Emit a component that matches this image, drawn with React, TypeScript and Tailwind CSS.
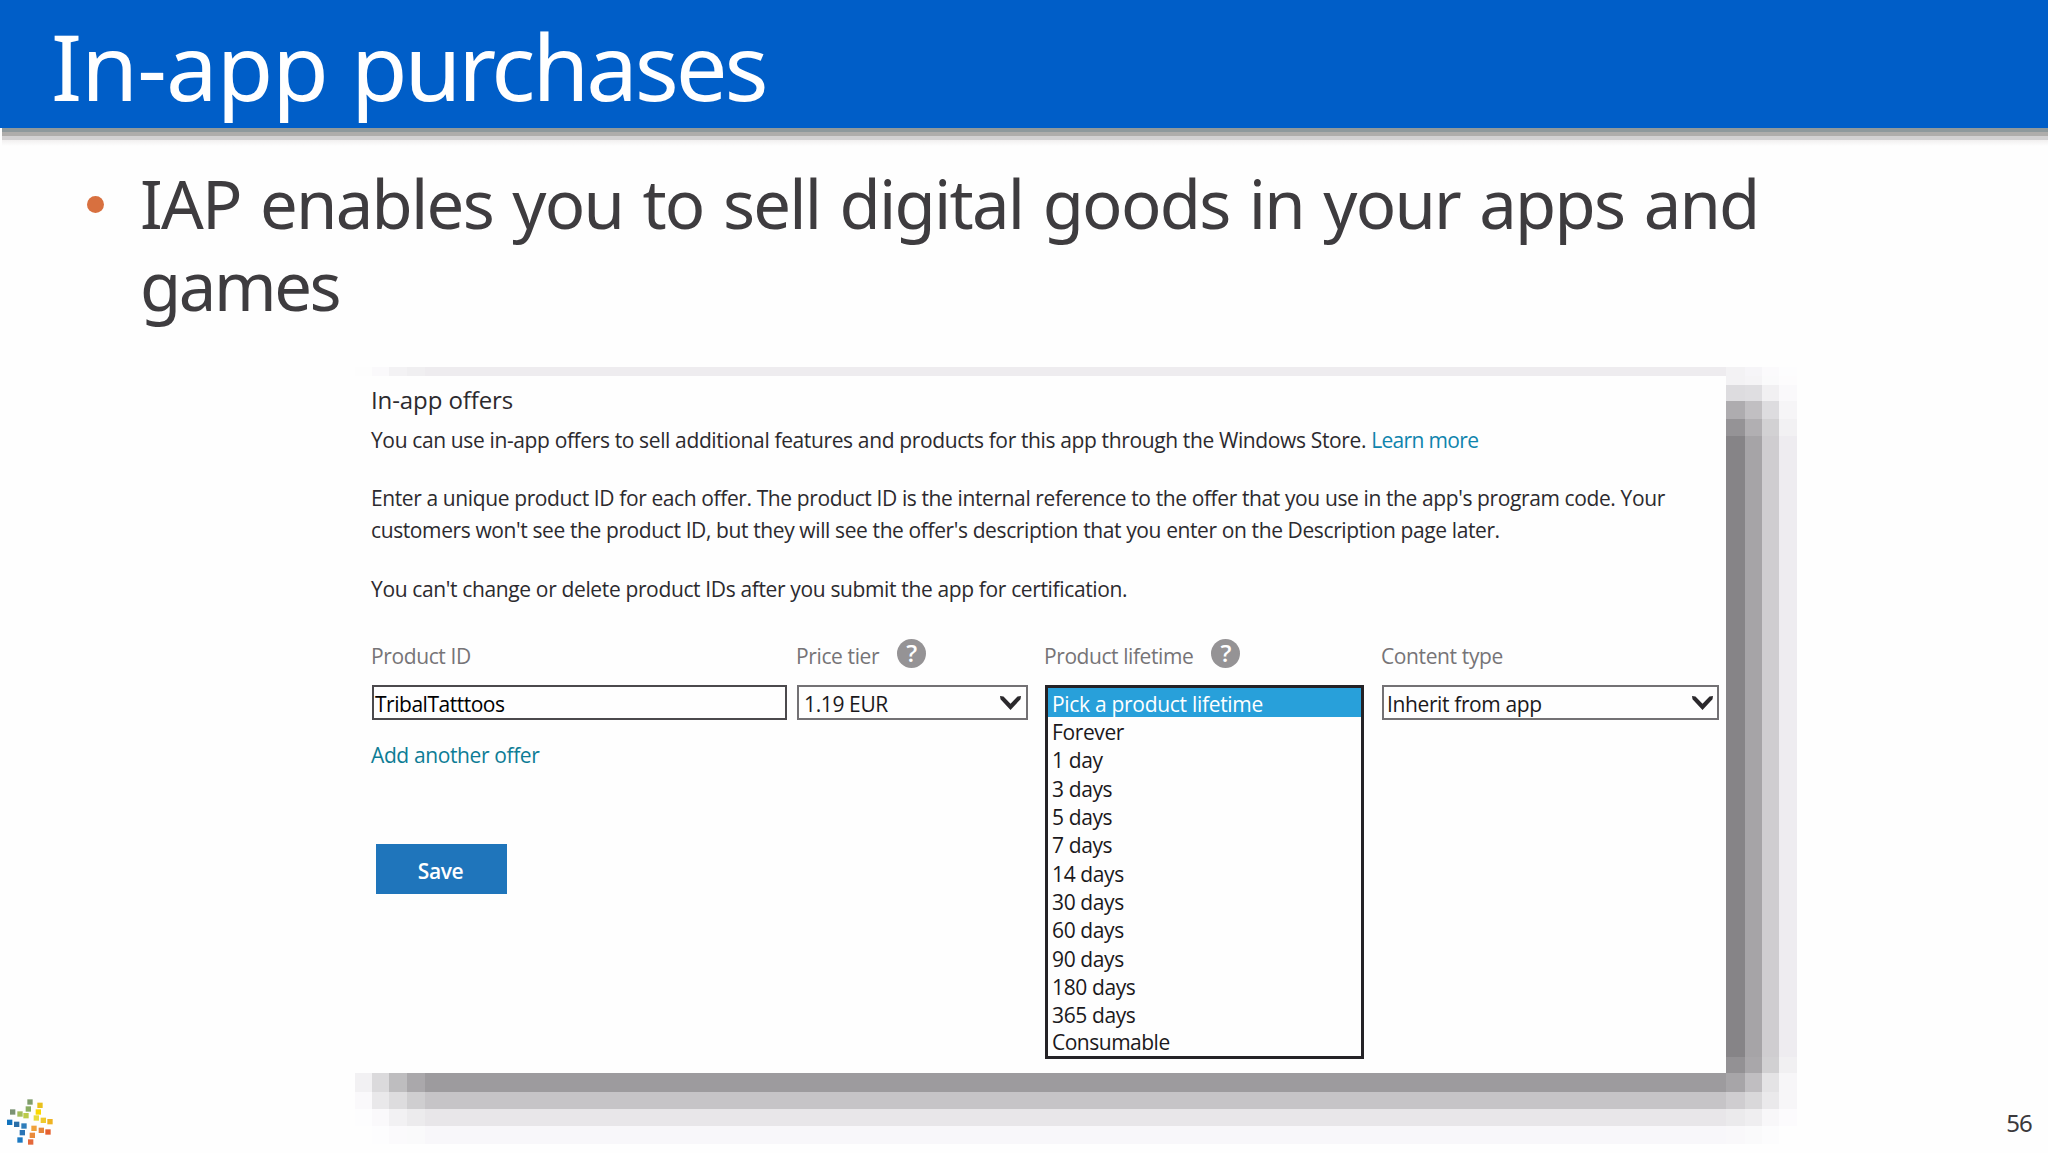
const shadowColumns = [
  'w-[17px]',
  'w-[17px]',
  'w-[18px]',
  'w-[18px]',
  'w-[1301px]',
  'w-[19px]',
  'w-[17px]',
  'w-[17px]',
  'w-[18px]',
];

const none = 'bg-transparent';

// The panel's drop shadow is a coarse grid of flat cells.
const shadowRows: { height: string; cells: string[] }[] = [
  { height: 'h-[9px]', cells: ['bg-[#fdfdfd]', 'bg-[#faf9fb]', 'bg-[#f3f2f4]', 'bg-[#f0eff1]', 'bg-[#eeecef]', 'bg-[#f3f2f4]', 'bg-[#f6f5f8]', 'bg-[#fbfafc]', 'bg-[#fdfdfe]'] },
  { height: 'h-[9px]', cells: [none, none, none, none, none, 'bg-[#f3f2f4]', 'bg-[#f5f4f6]', 'bg-[#fafafb]', 'bg-[#fdfcfd]'] },
  { height: 'h-[16px]', cells: [none, none, none, none, none, 'bg-[#dddcdf]', 'bg-[#dfdee1]', 'bg-[#f1f0f2]', 'bg-[#faf9fb]'] },
  { height: 'h-[18px]', cells: [none, none, none, none, none, 'bg-[#aeacaf]', 'bg-[#c1bfc2]', 'bg-[#dddcdf]', 'bg-[#f6f5f7]'] },
  { height: 'h-[17px]', cells: [none, none, none, none, none, 'bg-[#959396]', 'bg-[#b1afb2]', 'bg-[#d2d1d3]', 'bg-[#f2f1f3]'] },
  { height: 'h-[621px]', cells: [none, none, none, none, none, 'bg-[#868487]', 'bg-[#a6a4a7]', 'bg-[#cfcdd0]', 'bg-[#eeecf0]'] },
  { height: 'h-[16px]', cells: [none, none, none, none, none, 'bg-[#939194]', 'bg-[#a9a7aa]', 'bg-[#d1d0d2]', 'bg-[#f1f0f2]'] },
  { height: 'h-[19px]', cells: ['bg-[#f2f1f3]', 'bg-[#dbdadc]', 'bg-[#bebdbf]', 'bg-[#aaa8ab]', 'bg-[#9d9b9e]', 'bg-[#a7a5a8]', 'bg-[#c0bec1]', 'bg-[#e4e3e5]', 'bg-[#f7f6f8]'] },
  { height: 'h-[17px]', cells: ['bg-[#faf9fb]', 'bg-[#e9e8ea]', 'bg-[#dddcde]', 'bg-[#cfced0]', 'bg-[#c6c4c7]', 'bg-[#cfcdd0]', 'bg-[#d9d8da]', 'bg-[#eae9eb]', 'bg-[#f7f6f8]'] },
  { height: 'h-[17px]', cells: ['bg-[#fdfdfe]', 'bg-[#faf9fb]', 'bg-[#f2f1f3]', 'bg-[#ecebed]', 'bg-[#e8e6e9]', 'bg-[#ebeaec]', 'bg-[#efeef0]', 'bg-[#f8f7f9]', 'bg-[#fcfbfd]'] },
  { height: 'h-[18px]', cells: ['bg-[#fefefe]', 'bg-[#fdfdfe]', 'bg-[#fbfafc]', 'bg-[#fafafb]', 'bg-[#f8f7fa]', 'bg-[#f9f8fa]', 'bg-[#fafafb]', 'bg-[#fcfcfd]', 'bg-[#fefefe]'] },
];

const lifetimes = [
  'Forever',
  '1 day',
  '3 days',
  '5 days',
  '7 days',
  '14 days',
  '30 days',
  '60 days',
  '90 days',
  '180 days',
  '365 days',
];

function PanelShadow() {
  return (
    <div className="absolute -top-[9px] left-0 w-[1442px]" aria-hidden="true">
      {shadowRows.map((row, r) => (
        <div key={r} className={`flex ${row.height}`}>
          {row.cells.map((cell, c) => (
            <div key={c} className={`${shadowColumns[c]} ${cell}`} />
          ))}
        </div>
      ))}
    </div>
  );
}

function HelpIcon() {
  return (
    <span className="mb-[6px] flex size-[29px] items-center justify-center rounded-full bg-[#959395] text-[24px] leading-none font-semibold tracking-normal text-white">
      ?
    </span>
  );
}

function Chevron() {
  return (
    <svg className="-mt-[2px]" width="21" height="14" viewBox="0 0 21 14">
      <path d="M0 0 L3.5 0.6 L10.5 7.8 L17.5 0.6 L21 0 L20.5 3.2 L10.5 14 L0.5 3.2 Z" fill="#2b292c" />
    </svg>
  );
}

function Logo() {
  const squares: [number, number, string][] = [
    [90, 66, '#7f9d6c'], [85, 87, '#8aad62'], [38, 96, '#7b9274'], [60, 102, '#a3bd5c'], [78, 107, '#bccb4a'],
    [120, 76, '#e8c01d'], [115, 96, '#fbd800'], [109, 114, '#e9dc3c'], [130, 121, '#efc92c'], [150, 125, '#efb321'],
    [29, 127, '#1273bd'], [50, 133, '#2a6fa8'], [72, 138, '#2f7dba'], [67, 158, '#2b74b5'], [60, 180, '#1c79c2'],
    [102, 145, '#f0a13c'], [124, 151, '#e5853a'], [144, 156, '#e5602f'], [97, 166, '#e98a3c'], [92, 186, '#e4683a'],
  ];
  return (
    <svg width="80" height="73" viewBox="0 0 240 219">
      {squares.map(([x, y, fill]) => (
        <rect key={`${x}-${y}`} x={x - 8} y={y - 8} width="16" height="16" fill={fill} />
      ))}
    </svg>
  );
}

function Option({ label }: { label: string }) {
  return <li className="h-[28.33px] pl-[4px] leading-[30.33px]">{label}</li>;
}

export default function App() {
  return (
    <div className="relative flex h-[1153px] w-[2048px] flex-col overflow-hidden bg-[#fefefe] font-['Noto_Sans',sans-serif]">
      <header className="flex h-[128px] shrink-0 items-center bg-[#005ec8] pt-[3px] pl-[51px]">
        <h1 className="text-[92px] leading-[120px] tracking-[-0.9px] whitespace-nowrap text-white">
          In-app <span className="tracking-[-3.1px]">purchases</span>
        </h1>
      </header>
      <div className="ml-[2px] h-[4px] shrink-0 bg-[#8f999c]" />
      <div className="ml-[2px] h-[4px] shrink-0 bg-[#afadab]" />
      <div className="ml-[2px] h-[4px] shrink-0 bg-[#d3d1d2]" />
      <div className="ml-[2px] h-[6px] shrink-0 bg-linear-to-b from-[#f1efef] to-[#fefefe]" />

      <div className="mt-[17px] flex h-[164px] shrink-0 pl-[87px]">
        <span className="mt-[32.5px] size-[17px] shrink-0 rounded-full bg-[#d8703f]" />
        <p className="ml-[36px] text-[67px] leading-[81.7px] tracking-[-1.75px] [word-spacing:3.6px] whitespace-nowrap text-[#3e3c3f]">
          IAP enables you to sell digital goods in your apps and
          <br />
          <span className="tracking-[-2.4px]">games</span>
        </p>
      </div>

      <section className="relative mt-[49px] ml-[355px] h-[697px] w-[1371px] shrink-0 font-['Open_Sans',sans-serif] text-[21px] leading-[32px] tracking-[-0.38px] whitespace-nowrap text-[#2c2a2e]">
        <PanelShadow />
        <div className="relative flex h-full flex-col bg-[#fefefe] pt-[8px] pl-[16px]">
          <h2 className="text-[24px] leading-[32px] tracking-[-0.1px]">In-app offers</h2>
          <p className="mt-[8px] tracking-[-0.37px]">
            You can use in-app offers to sell additional features and products for this app through the Windows Store.{' '}
            <a className="tracking-[-0.65px] text-[#0f84ad]">Learn more</a>
          </p>
          <p className="mt-[26px] tracking-[-0.39px]">
            Enter a unique product ID for each offer. The product ID is the internal reference to the offer that you use in the app's program code. Your
            <br />
            customers won't see the product ID, but they will see the offer's description that you enter on the Description page later.
          </p>
          <p className="mt-[27px] tracking-[-0.36px]">You can't change or delete product IDs after you submit the app for certification.</p>

          <div className="mt-[35px] grid h-[32px] grid-cols-[425px_248px_337px_337px] text-[#767477]">
            <div>Product ID</div>
            <div className="flex h-[32px] items-center gap-[18px]">
              Price tier
              <HelpIcon />
            </div>
            <div className="flex h-[32px] items-center gap-[18px] tracking-[-0.42px]">
              Product lifetime
              <HelpIcon />
            </div>
            <div>Content type</div>
          </div>

          <div className="mt-[13px] ml-px flex h-[35px] text-[#1b191c]">
            <div className="flex w-[415px] items-center border-2 border-[#4b494c] pt-[2px] pl-px tracking-[-0.48px] text-black">TribalTatttoos</div>
            <div className="ml-[10px] flex w-[231px] items-center justify-between border-2 border-[#737174] pt-[2px] pr-[5px] pl-[5px]">
              1.19 EUR
              <Chevron />
            </div>
            <div className="relative ml-[17px] w-[319px]">
              <ul className="absolute inset-x-0 top-0 h-[374px] border-[3px] border-[#242226] bg-[#fefefe]">
                <li className="h-[29px] bg-[#28a0da] pl-[4px] leading-[32px] tracking-[-0.3px] text-white">Pick a product lifetime</li>
                {lifetimes.map((label) => (
                  <Option key={label} label={label} />
                ))}
                <li className="-mt-[1.5px] h-[27px] pl-[4px] leading-[30.33px] tracking-[-0.5px]">Consumable</li>
              </ul>
            </div>
            <div className="ml-[18px] flex w-[337px] items-center justify-between border-2 border-[#737174] pt-[2px] pr-[4px] pl-[3px]">
              Inherit from app
              <Chevron />
            </div>
          </div>

          <a className="mt-[19px] text-[#0d7c95]">Add another offer</a>
          <button className="mt-[73px] ml-[5px] flex h-[50px] w-[131px] items-center justify-center bg-[#1f75bb] pt-[3px] pr-[2px] font-semibold text-white">
            Save
          </button>
        </div>
      </section>

      <div className="absolute bottom-0 left-0">
        <Logo />
      </div>
      <div className="absolute right-[16px] bottom-[14px] text-[24px] leading-[33px] tracking-[-0.8px] text-[#3b393c]">56</div>
    </div>
  );
}
